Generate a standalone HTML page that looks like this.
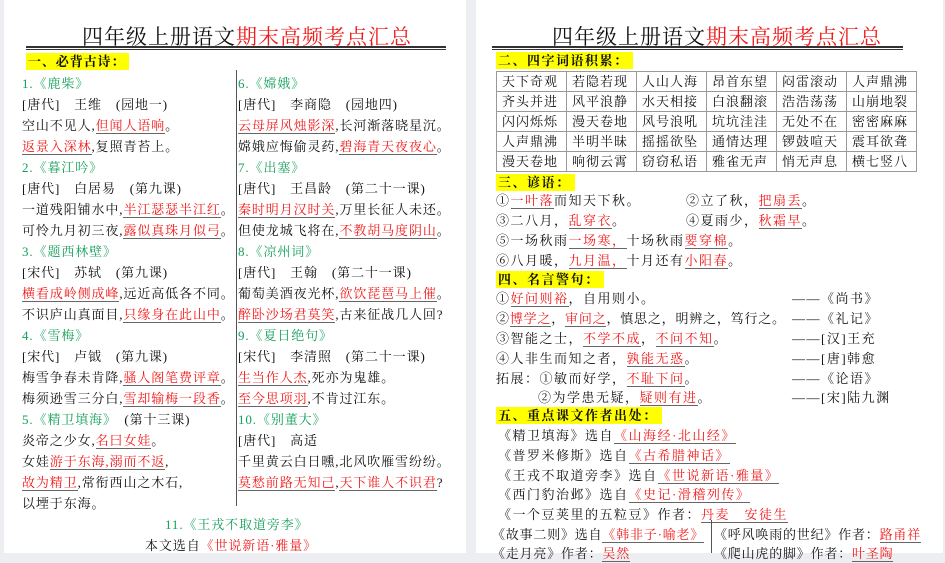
<!DOCTYPE html>
<html><head><meta charset="utf-8">
<style>
*{margin:0;padding:0;box-sizing:border-box}
body{width:945px;height:553px;background:#eceef2;overflow:hidden;position:relative;font-family:"Liberation Serif","Noto Serif CJK SC","Noto Sans CJK SC",serif;color:#111}
.pg{position:absolute;top:0;height:553px;background:#fff}
.l{position:absolute;white-space:nowrap;font-size:13px;line-height:18px;letter-spacing:0.9px}
.R .l{letter-spacing:1.5px}
.R .l.n{letter-spacing:0.8px}
.g{color:#13a05a}
.r{color:#f01818;border-bottom:1px solid #666}
.rn{color:#f01818}
.h{background:#ffff00;font-weight:bold;font-size:13px;padding:1px 4px 1px 2px}
.t{position:absolute;font-size:21px;line-height:26px;white-space:nowrap;letter-spacing:1px}
.rule{position:absolute;height:4px;border-top:2px solid #333;border-bottom:1px solid #333}
table{position:absolute;border-collapse:collapse;font-size:13px;letter-spacing:1px}
td{border:1px solid #999;width:70px;height:20px;padding-left:5px;line-height:18px;white-space:nowrap}
</style></head><body>
<div class="pg" style="left:4px;width:462px"></div>
<div class="pg" style="left:476px;width:467px"></div>

<!-- LEFT PAGE -->
<div class="t" style="left:82px;top:24px">四年级上册语文<span class="rn">期末高频考点汇总</span></div>
<div class="rule" style="left:26px;top:46px;width:420px"></div>
<div style="position:absolute;left:236px;top:70px;width:1px;height:436px;background:#555"></div>
<div class="l" style="left:26px;top:53px"><span class="h">一、必背古诗：</span></div>
<div class="l g" style="left:22px;top:75px">1.《鹿柴》</div>
<div class="l" style="left:22px;top:96px">[唐代]　王维　(园地一)</div>
<div class="l" style="left:22px;top:117px">空山不见人,<span class="r">但闻人语响</span>。</div>
<div class="l" style="left:22px;top:138px"><span class="r">返景入深林</span>,复照青苔上。</div>
<div class="l g" style="left:22px;top:159px">2.《暮江吟》</div>
<div class="l" style="left:22px;top:180px">[唐代]　白居易　(第九课)</div>
<div class="l" style="left:22px;top:201px">一道残阳铺水中,<span class="r">半江瑟瑟半江红</span>。</div>
<div class="l" style="left:22px;top:222px">可怜九月初三夜,<span class="r">露似真珠月似弓</span>。</div>
<div class="l g" style="left:22px;top:243px">3.《题西林壁》</div>
<div class="l" style="left:22px;top:264px">[宋代]　苏轼　(第九课)</div>
<div class="l" style="left:22px;top:285px"><span class="r">横看成岭侧成峰</span>,远近高低各不同。</div>
<div class="l" style="left:22px;top:306px">不识庐山真面目,<span class="r">只缘身在此山中</span>。</div>
<div class="l g" style="left:22px;top:327px">4.《雪梅》</div>
<div class="l" style="left:22px;top:348px">[宋代]　卢钺　(第九课)</div>
<div class="l" style="left:22px;top:369px">梅雪争春未肯降,<span class="r">骚人阁笔费评章</span>。</div>
<div class="l" style="left:22px;top:390px">梅须逊雪三分白,<span class="r">雪却输梅一段香</span>。</div>
<div class="l" style="left:22px;top:411px"><span class="g">5.《精卫填海》</span>　(第十三课)</div>
<div class="l" style="left:22px;top:432px">炎帝之少女,<span class="r">名曰女娃</span>。</div>
<div class="l" style="left:22px;top:453px">女娃<span class="r">游于东海,溺而不返</span>,</div>
<div class="l" style="left:22px;top:474px"><span class="r">故为精卫</span>,常衔西山之木石,</div>
<div class="l" style="left:22px;top:495px">以堙于东海。</div>

<div class="l g" style="left:238px;top:75px">6.《嫦娥》</div>
<div class="l" style="left:238px;top:96px">[唐代]　李商隐　(园地四)</div>
<div class="l" style="left:238px;top:117px"><span class="r">云母屏风烛影深</span>,长河渐落晓星沉。</div>
<div class="l" style="left:238px;top:138px">嫦娥应悔偷灵药,<span class="r">碧海青天夜夜心</span>。</div>
<div class="l g" style="left:238px;top:159px">7.《出塞》</div>
<div class="l" style="left:238px;top:180px">[唐代]　王昌龄　(第二十一课)</div>
<div class="l" style="left:238px;top:201px"><span class="r">秦时明月汉时关</span>,万里长征人未还。</div>
<div class="l" style="left:238px;top:222px">但使龙城飞将在,<span class="r">不教胡马度阴山</span>。</div>
<div class="l g" style="left:238px;top:243px">8.《凉州词》</div>
<div class="l" style="left:238px;top:264px">[唐代]　王翰　(第二十一课)</div>
<div class="l" style="left:238px;top:285px">葡萄美酒夜光杯,<span class="r">欲饮琵琶马上催</span>。</div>
<div class="l" style="left:238px;top:306px"><span class="r">醉卧沙场君莫笑</span>,古来征战几人回?</div>
<div class="l g" style="left:238px;top:327px">9.《夏日绝句》</div>
<div class="l" style="left:238px;top:348px">[宋代]　李清照　(第二十一课)</div>
<div class="l" style="left:238px;top:369px"><span class="r">生当作人杰</span>,死亦为鬼雄。</div>
<div class="l" style="left:238px;top:390px"><span class="r">至今思项羽</span>,不肯过江东。</div>
<div class="l g" style="left:238px;top:411px">10.《别董大》</div>
<div class="l" style="left:238px;top:432px">[唐代]　高适</div>
<div class="l" style="left:238px;top:453px">千里黄云白日曛,北风吹雁雪纷纷。</div>
<div class="l" style="left:238px;top:474px"><span class="r">莫愁前路无知己</span>,<span class="r">天下谁人不识君</span>?</div>

<div class="l g" style="left:165px;top:516px">11.《王戎不取道旁李》</div>
<div class="l" style="left:145px;top:537px">本文选自<span class="rn">《世说新语·雅量》</span></div>

<!-- RIGHT PAGE -->
<div class="R">
<div class="t" style="left:552px;top:24px">四年级上册语文<span class="rn">期末高频考点汇总</span></div>
<div class="rule" style="left:492px;top:46px;width:411px"></div>
<div class="l" style="left:496px;top:52px"><span class="h">二、四字词语积累：</span></div>
<table style="left:496px;top:71px">
<tr><td>天下奇观</td><td>若隐若现</td><td>人山人海</td><td>昂首东望</td><td>闷雷滚动</td><td>人声鼎沸</td></tr>
<tr><td>齐头并进</td><td>风平浪静</td><td>水天相接</td><td>白浪翻滚</td><td>浩浩荡荡</td><td>山崩地裂</td></tr>
<tr><td>闪闪烁烁</td><td>漫天卷地</td><td>风号浪吼</td><td>坑坑洼洼</td><td>无处不在</td><td>密密麻麻</td></tr>
<tr><td>人声鼎沸</td><td>半明半昧</td><td>摇摇欲坠</td><td>通情达理</td><td>锣鼓喧天</td><td>震耳欲聋</td></tr>
<tr><td>漫天卷地</td><td>响彻云霄</td><td>窃窃私语</td><td>雅雀无声</td><td>悄无声息</td><td>横七竖八</td></tr>
</table>
<div class="l" style="left:496px;top:174px"><span class="h">三、谚语：</span></div>
<div class="l" style="left:496px;top:192px">①<span class="r">一叶落</span>而知天下秋。</div>
<div class="l" style="left:686px;top:192px">②立了秋，<span class="r">把扇丢</span>。</div>
<div class="l" style="left:496px;top:212px">③二八月，<span class="r">乱穿衣</span>。</div>
<div class="l" style="left:686px;top:212px">④夏雨少，<span class="r">秋霜早</span>。</div>
<div class="l" style="left:496px;top:232px">⑤一场秋雨<span class="r">一场寒，</span>十场秋雨<span class="r">要穿棉</span>。</div>
<div class="l" style="left:496px;top:252px">⑥八月暖，<span class="r">九月温，</span>十月还有<span class="r">小阳春</span>。</div>
<div class="l" style="left:496px;top:271px"><span class="h">四、名言警句：</span></div>
<div class="l" style="left:496px;top:290px">①<span class="r">好问则裕</span>，自用则小。</div>
<div class="l n" style="left:496px;top:310px">②<span class="r">博学之</span>，<span class="r">审问之</span>，慎思之，明辨之，笃行之。</div>
<div class="l" style="left:496px;top:330px">③智能之士，<span class="r">不学不成</span>，<span class="r">不问不知</span>。</div>
<div class="l" style="left:496px;top:350px">④人非生而知之者，<span class="r">孰能无惑</span>。</div>
<div class="l" style="left:496px;top:370px">拓展：①敏而好学，<span class="r">不耻下问</span>。</div>
<div class="l" style="left:538px;top:389px">②为学患无疑，<span class="r">疑则有进</span>。</div>
<div class="l" style="left:792px;top:290px">——《尚书》</div>
<div class="l" style="left:792px;top:310px">——《礼记》</div>
<div class="l" style="left:792px;top:330px">——[汉]王充</div>
<div class="l" style="left:792px;top:350px">——[唐]韩愈</div>
<div class="l" style="left:792px;top:370px">——《论语》</div>
<div class="l" style="left:792px;top:389px">——[宋]陆九渊</div>
<div class="l" style="left:496px;top:407px"><span class="h">五、重点课文作者出处：</span></div>
<div class="l" style="left:498px;top:427px">《精卫填海》选自<span class="r">《山海经·北山经》</span></div>
<div class="l" style="left:498px;top:447px">《普罗米修斯》选自<span class="r">《古希腊神话》</span></div>
<div class="l" style="left:498px;top:467px">《王戎不取道旁李》选自<span class="r">《世说新语·雅量》</span></div>
<div class="l" style="left:498px;top:486px">《西门豹治邺》选自<span class="r">《史记·滑稽列传》</span></div>
<div class="l" style="left:498px;top:506px">《一个豆荚里的五粒豆》作者：<span class="r">丹麦　安徒生</span></div>
<div style="position:absolute;left:711px;top:520px;width:1px;height:33px;background:#555"></div>
<div class="l n" style="left:492px;top:526px">《故事二则》选自<span class="r">《韩非子·喻老》</span></div>
<div class="l n" style="left:714px;top:526px">《呼风唤雨的世纪》作者：<span class="r">路甬祥</span></div>
<div class="l n" style="left:492px;top:545px">《走月亮》作者：<span class="r">吴然</span></div>
<div class="l n" style="left:714px;top:545px">《爬山虎的脚》作者：<span class="r">叶圣陶</span></div>
</div>
</body></html>
